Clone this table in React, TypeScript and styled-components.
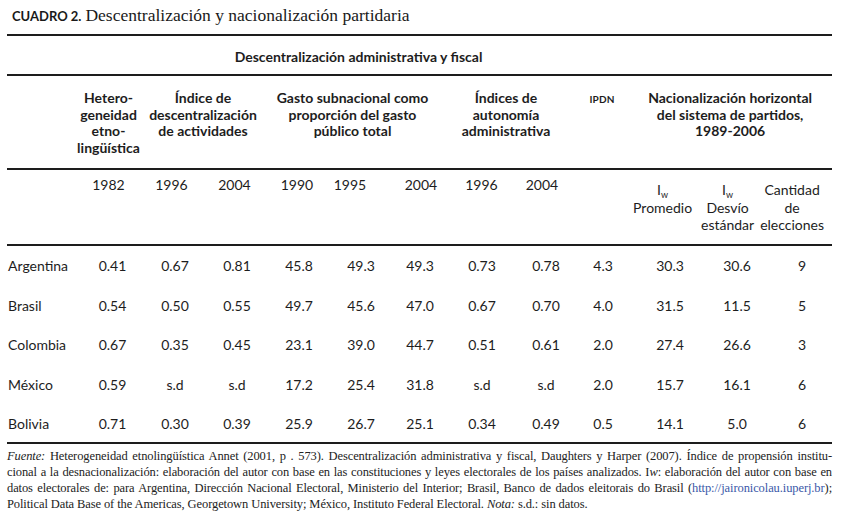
import styled, { createGlobalStyle } from 'styled-components';

// Cuadro 2 – tabla de descentralización y nacionalización partidaria.
const GlobalStyle = createGlobalStyle`
  html, body {
    margin: 0;
    padding: 0;
    background: #ffffff;
  }
  body {
    color: #1d1d1d;
    font-family: Lato, "Noto Sans", sans-serif;
  }
`;

type Row = {
  country: string;
  values: string[];
};

const rows: Row[] = [
  { country: 'Argentina', values: ['0.41', '0.67', '0.81', '45.8', '49.3', '49.3', '0.73', '0.78', '4.3', '30.3', '30.6', '9'] },
  { country: 'Brasil', values: ['0.54', '0.50', '0.55', '49.7', '45.6', '47.0', '0.67', '0.70', '4.0', '31.5', '11.5', '5'] },
  { country: 'Colombia', values: ['0.67', '0.35', '0.45', '23.1', '39.0', '44.7', '0.51', '0.61', '2.0', '27.4', '26.6', '3'] },
  { country: 'México', values: ['0.59', 's.d', 's.d', '17.2', '25.4', '31.8', 's.d', 's.d', '2.0', '15.7', '16.1', '6'] },
  { country: 'Bolivia', values: ['0.71', '0.30', '0.39', '25.9', '26.7', '25.1', '0.34', '0.49', '0.5', '14.1', '5.0', '6'] },
];

// ancho de cada columna (la primera es la de países)
const colWidths = [70, 63, 63, 63, 58, 62, 65, 61, 60, 60, 63, 65, 72];
// desplazamiento horizontal de las cifras dentro de cada columna
const dataShift = [4, 3.5, 2.5, 4, 6, 1.5, 0.5, 4, 1, 6.5, 9.5, 6];
const years = ['1982', '1996', '2004', '1990', '1995', '2004', '1996', '2004'];
const yearShift = [0, 0, 0, 2, -5, 2.5, 0, 0];

const Page = styled.div`
  width: 843px;
  height: 516px;
  padding: 0 11px 0 7px;
  box-sizing: border-box;
  overflow: hidden;
`;

const Caption = styled.h2`
  margin: 0;
  height: 34px;
  padding: 5px 0 0 5px;
  box-sizing: border-box;
  font-family: 'Liberation Serif', serif;
  font-weight: 400;
  font-size: 17.5px;
  line-height: 21px;
  color: #1a1a1a;
`;

const CaptionLabel = styled.span`
  font-family: Lato, sans-serif;
  font-weight: 700;
  font-size: 13px;
  margin-right: 4px;
`;

const Table = styled.table`
  width: 825px;
  border-collapse: separate;
  border-spacing: 0;
  table-layout: fixed;
  border-top: 2px solid #1d1d1d;
`;

const Col = styled.col<{ $w: number }>`
  width: ${({ $w }) => $w}px;
`;

const Rule = styled.tr<{ $height: number }>`
  height: ${({ $height }) => $height}px;

  & > * {
    border-bottom: 2px solid #1d1d1d;
  }
`;

const BodyRow = styled.tr`
  height: 39.6px;
`;

const Cell = styled.td<{ $shift?: number }>`
  padding: 0;
  padding-left: ${({ $shift = 0 }) => Math.max(0, $shift * 2)}px;
  padding-right: ${({ $shift = 0 }) => Math.max(0, -$shift * 2)}px;
  text-align: center;
  font-size: 14px;
  line-height: 17px;
  white-space: nowrap;
`;

const GroupHead = styled(Cell).attrs({ as: 'th' })`
  font-weight: 700;
  vertical-align: middle;
  padding-top: 2px;
`;

const Head = styled(Cell).attrs({ as: 'th' })`
  font-weight: 700;
  vertical-align: top;
  line-height: 16.5px;
  padding-top: 14px;
`;

const SmallCaps = styled.span`
  font-size: 10px;
  letter-spacing: 0.2px;
`;

const YearCell = styled(Cell)<{ $stack?: boolean }>`
  vertical-align: top;
  padding-top: ${({ $stack }) => ($stack ? 11 : 6)}px;
  line-height: ${({ $stack }) => ($stack ? 17.5 : 17)}px;

  sub {
    font-size: 9px;
    line-height: 0;
    vertical-align: -3px;
  }
`;

const Country = styled(Cell)`
  text-align: left;
  padding-left: 1px;
`;

const Note = styled.div`
  margin-top: 4px;
  font-family: 'Liberation Serif', serif;
  font-size: 12.5px;
  letter-spacing: -0.1px;
  line-height: 16px;
  color: #222;
`;

const NoteLine = styled.div<{ $last?: boolean }>`
  white-space: nowrap;
  text-align: justify;
  text-align-last: ${({ $last }) => ($last ? 'left' : 'justify')};
`;

const Link = styled.span`
  color: #3a58a8;
`;

export default function App() {
  return (
    <Page>
      <GlobalStyle />
      <Caption>
        <CaptionLabel>CUADRO 2.</CaptionLabel>Descentralización y nacionalización partidaria
      </Caption>

      <Table>
        <colgroup>
          {colWidths.map((w, i) => (
            <Col key={i} $w={w} />
          ))}
        </colgroup>
        <thead>
          <Rule $height={40}>
            <GroupHead />
            <GroupHead colSpan={9} $shift={4}>
              Descentralización administrativa y fiscal
            </GroupHead>
            <GroupHead colSpan={3} />
          </Rule>
          <Rule $height={94}>
            <Head />
            <Head>
              Hetero-
              <br />
              geneidad
              <br />
              etno-
              <br />
              lingüística
            </Head>
            <Head colSpan={2}>
              Índice de
              <br />
              descentralización
              <br />
              de actividades
            </Head>
            <Head colSpan={3} $shift={-6}>
              Gasto subnacional como
              <br />
              proporción del gasto
              <br />
              público total
            </Head>
            <Head colSpan={2} $shift={-5.5}>
              Índices de
              <br />
              autonomía
              <br />
              administrativa
            </Head>
            <Head>
              <SmallCaps>IPDN</SmallCaps>
            </Head>
            <Head colSpan={3} $shift={-2}>
              Nacionalización horizontal
              <br />
              del sistema de partidos,
              <br />
              1989-2006
            </Head>
          </Rule>
          <Rule $height={76}>
            <YearCell />
            {years.map((y, i) => (
              <YearCell key={i} $shift={yearShift[i]}>
                {y}
              </YearCell>
            ))}
            <YearCell />
            <YearCell $stack $shift={-1}>
              I<sub>w</sub>
              <br />
              Promedio
            </YearCell>
            <YearCell $stack>
              I<sub>w</sub>
              <br />
              Desvío
              <br />
              estándar
            </YearCell>
            <YearCell $stack $shift={-4}>
              Cantidad
              <br />
              de
              <br />
              elecciones
            </YearCell>
          </Rule>
        </thead>
        <tbody>
          {rows.map((row, r) => {
            const cells = (
              <>
                <Country>{row.country}</Country>
                {row.values.map((v, i) => (
                  <Cell key={i} $shift={dataShift[i]}>
                    {v}
                  </Cell>
                ))}
              </>
            );
            return r === rows.length - 1 ? (
              <Rule key={row.country} $height={40}>
                {cells}
              </Rule>
            ) : (
              <BodyRow key={row.country}>{cells}</BodyRow>
            );
          })}
        </tbody>
      </Table>

      <Note>
        <NoteLine>
          <i>Fuente:</i> Heterogeneidad etnolingüística Annet (2001, p . 573). Descentralización administrativa y fiscal,
          Daughters y Harper (2007). Índice de propensión institu-
        </NoteLine>
        <NoteLine>
          cional a la desnacionalización: elaboración del autor con base en las constituciones y leyes electorales de los
          países analizados. I<i>w</i>: elaboración del autor con base en
        </NoteLine>
        <NoteLine>
          datos electorales de: para Argentina, Dirección Nacional Electoral, Ministerio del Interior; Brasil, Banco de
          dados eleitorais do Brasil (<Link>http://jaironicolau.iuperj.br</Link>);
        </NoteLine>
        <NoteLine $last>
          Political Data Base of the Americas, Georgetown University; México, Instituto Federal Electoral.{' '}
          <i>Nota:</i> s.d.: sin datos.
        </NoteLine>
      </Note>
    </Page>
  );
}
